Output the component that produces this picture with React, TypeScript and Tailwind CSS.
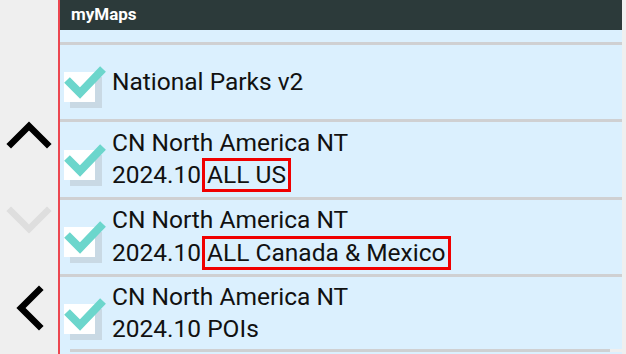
import type { ReactNode } from 'react';

function Chevron({ points, color }: { points: string; color: string }) {
  return (
    <svg width="60" height="50" viewBox="0 0 60 50" className="block">
      <polyline points={points} fill="none" stroke={color} strokeWidth="6.5" strokeLinecap="square" />
    </svg>
  );
}

function CheckBox() {
  return (
    <svg width="46" height="50" viewBox="0 0 46 50" className="mt-[11px] shrink-0">
      <rect x="8" y="15" width="32" height="31" fill="#c9d9e4" />
      <rect x="2" y="10" width="31" height="30" fill="#ffffff" />
      <polyline points="5,18 18,31 41,7" fill="none" stroke="#6cd6cc" strokeWidth="8" />
    </svg>
  );
}

function Row({ children, last }: { children: ReactNode; last?: boolean }) {
  return (
    <div
      className={
        last
          ? 'flex h-[72px] items-center pl-[2px]'
          : 'flex h-[77.5px] items-center border-b-[3px] border-[#cfd0d2] pl-[2px]'
      }
    >
      <CheckBox />
      <div className="ml-[4px] text-[24.5px] leading-[32.5px] text-[#111]">{children}</div>
    </div>
  );
}

function Boxed({ children }: { children: ReactNode }) {
  return (
    <span className="-my-[3px] ml-[1px] inline-block border-[3px] border-[#f00000] px-[2px] leading-[28px]">
      {children}
    </span>
  );
}

export default function App() {
  return (
    <div className="flex h-[354px] w-[626px] overflow-hidden bg-[#efefef] font-['Roboto',sans-serif]">
      <div className="flex w-[60px] shrink-0 flex-col items-center border-r-2 border-[#ec4650]">
        <div className="mt-[103px]">
          <Chevron points="12,41 30,23 48,41" color="#000" />
        </div>
        <div className="mt-[52px]">
          <Chevron points="12,6 30,24 48,6" color="#dedede" />
        </div>
        <div className="mt-[28px]">
          <Chevron points="40,7 22,25 40,43" color="#000" />
        </div>
      </div>
      <div className="flex w-[562px] flex-col bg-[#dbf0fe]">
        <div className="flex h-[30px] shrink-0 items-center bg-[#2c3a3a] pl-[11px] text-[17px] font-bold text-white">
          myMaps
        </div>
        <div className="h-[14.7px] shrink-0 border-b-[3px] border-[#cfd0d2]" />
        <Row>National Parks v2</Row>
        <Row>
          CN North America NT
          <br />
          2024.10<Boxed>ALL US</Boxed>
        </Row>
        <Row>
          CN North America NT
          <br />
          2024.10<Boxed>ALL Canada &amp; Mexico</Boxed>
        </Row>
        <Row last>
          CN North America NT
          <br />
          2024.10 POIs
        </Row>
        <div className="flex h-[3px] shrink-0">
          <div className="w-[10px] bg-[#dbf0fe]" />
          <div className="w-[540px] bg-[#cfd0d2]" />
          <div className="flex-1 bg-[#efefef]" />
        </div>
      </div>
    </div>
  );
}
